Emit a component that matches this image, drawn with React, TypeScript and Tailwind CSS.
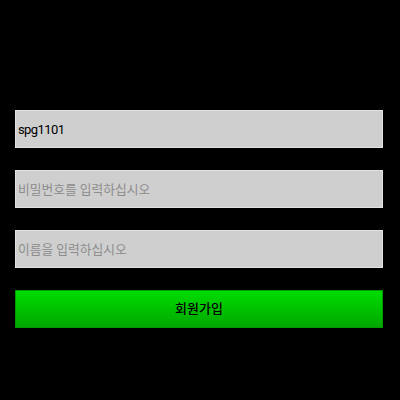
export default function App() {
  const font = { fontFamily: 'Roboto, "Noto Sans CJK KR", sans-serif' };
  return (
    <div className="w-[400px] h-[400px] bg-black pt-[110px] px-[15px] flex flex-col gap-[22px]" style={font}>
      <input
        defaultValue="spg1101"
        className="h-[38px] w-[368px] bg-[#cfcfcf] border border-[#e2e2e2] px-[2px] pt-[1px] text-[13px] tracking-[-0.6px] text-black outline-none"
      />
      <input
        placeholder="비밀번호를 입력하십시오"
        className="h-[38px] w-[368px] bg-[#cfcfcf] border border-[#e2e2e2] px-[2px] text-[12.75px] text-black placeholder:text-[#8c8c8c] outline-none"
      />
      <input
        placeholder="이름을 입력하십시오"
        className="h-[38px] w-[368px] bg-[#cfcfcf] border border-[#e2e2e2] px-[2px] text-[12.75px] text-black placeholder:text-[#8c8c8c] outline-none"
      />
      <button className="h-[38px] w-[368px] border border-[#009a00] bg-gradient-to-b from-[#00dc00] to-[#00a800] text-[13px] font-medium text-black">
        회원가입
      </button>
    </div>
  );
}
